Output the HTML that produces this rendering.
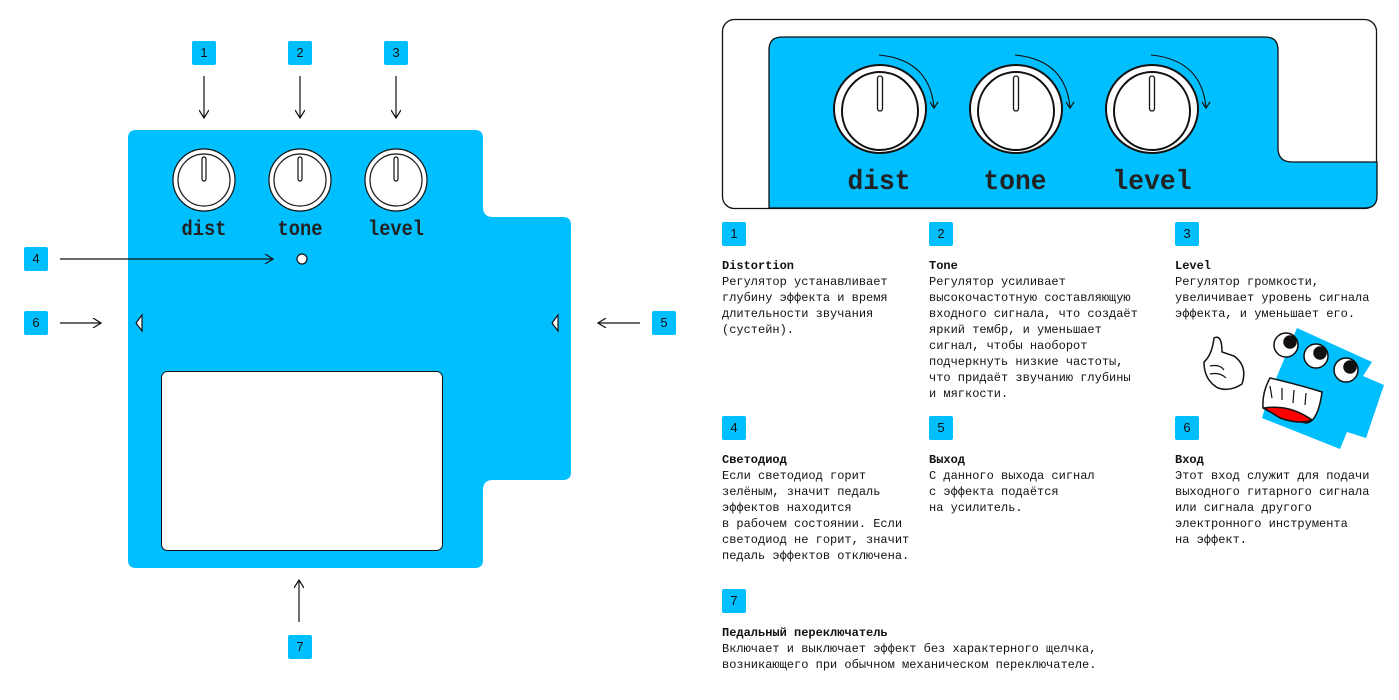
<!DOCTYPE html>
<html><head><meta charset="utf-8"><style>
*{margin:0;padding:0}
body{width:1399px;height:700px;background:#fff;position:relative;overflow:hidden;font-family:"Liberation Mono","DejaVu Sans Mono",monospace;color:#111}
.b{position:absolute;width:24px;height:24px;background:#00bfff;border-radius:2px;font:13px "Liberation Sans",sans-serif;line-height:24px;text-align:center;color:#111}
.t{position:absolute;font-size:12px;line-height:16px;white-space:pre}
.t b{font-weight:bold}
</style></head><body>
<svg width="1399" height="700" style="position:absolute;left:0;top:0">
<defs><marker id="a" markerWidth="10" markerHeight="10" refX="9" refY="5" orient="auto" markerUnits="userSpaceOnUse"><path d="M1,0 L9,5 L1,10" fill="none" stroke="#111" stroke-width="1.2"/></marker>
<marker id="s" markerWidth="10" markerHeight="10" refX="5" refY="8" orient="0" markerUnits="userSpaceOnUse"><path d="M1,2 L5,8 L9,2" fill="none" stroke="#111" stroke-width="1.2"/></marker></defs>
<path d="M136,130 H475 Q483,130 483,138 V207 Q483,217 493,217 H563 Q571,217 571,225 V472 Q571,480 563,480 H493 Q483,480 483,490 V560 Q483,568 475,568 H136 Q128,568 128,560 V138 Q128,130 136,130Z" fill="#00bfff"/>
<rect x="161.5" y="371.5" width="281" height="179" rx="6" fill="#fff" stroke="#111"/>
<g fill="#fff" stroke="#111" stroke-width="1.2">
<circle cx="204" cy="180" r="31"/><circle cx="204" cy="180" r="26"/><rect x="202" y="157" width="4" height="24" rx="2"/>
<circle cx="300" cy="180" r="31"/><circle cx="300" cy="180" r="26"/><rect x="298" y="157" width="4" height="24" rx="2"/>
<circle cx="396" cy="180" r="31"/><circle cx="396" cy="180" r="26"/><rect x="394" y="157" width="4" height="24" rx="2"/>
<circle cx="302" cy="259" r="5"/>
<path d="M142,315 L136,323 L142,331Z"/><path d="M558,315 L552,323 L558,331Z"/>
</g>
<g font-family="Liberation Mono,monospace" font-weight="bold" font-size="21" text-anchor="middle" fill="#222">
<text x="204" y="235" textLength="45" lengthAdjust="spacingAndGlyphs">dist</text><text x="300" y="235" textLength="45" lengthAdjust="spacingAndGlyphs">tone</text><text x="396" y="235" textLength="56" lengthAdjust="spacingAndGlyphs">level</text></g>
<g stroke="#111" stroke-width="1.2" marker-end="url(#a)">
<line x1="204" y1="76" x2="204" y2="118"/><line x1="300" y1="76" x2="300" y2="118"/><line x1="396" y1="76" x2="396" y2="118"/>
<line x1="60" y1="259" x2="273" y2="259"/><line x1="60" y1="323" x2="101" y2="323"/><line x1="640" y1="323" x2="598" y2="323"/>
<line x1="299" y1="622" x2="299" y2="580"/></g>
<!-- right panel -->
<rect x="722.5" y="19.5" width="654" height="189" rx="12" fill="#fff" stroke="#111" stroke-width="1.3"/>
<path d="M769,208 V50 Q769,37 782,37 H1265 Q1278,37 1278,50 V148 Q1278,162 1292,162 H1377 V196 Q1377,208 1365,208Z" fill="#00bfff" stroke="#111" stroke-width="1.3"/>
<g fill="#fff" stroke="#111" stroke-width="2">
<ellipse cx="880" cy="109" rx="46" ry="44"/><ellipse cx="880" cy="111" rx="38" ry="39"/><rect x="877.5" y="76" width="5" height="35" rx="2.5" stroke-width="1.3"/>
<ellipse cx="1016" cy="109" rx="46" ry="44"/><ellipse cx="1016" cy="111" rx="38" ry="39"/><rect x="1013.5" y="76" width="5" height="35" rx="2.5" stroke-width="1.3"/>
<ellipse cx="1152" cy="109" rx="46" ry="44"/><ellipse cx="1152" cy="111" rx="38" ry="39"/><rect x="1149.5" y="76" width="5" height="35" rx="2.5" stroke-width="1.3"/>
</g>
<g fill="none" stroke="#111" stroke-width="1.1" marker-end="url(#s)">
<path d="M879,55 Q930,60 934,108"/>
<path d="M1015,55 Q1066,60 1070,108"/>
<path d="M1151,55 Q1202,60 1206,108"/>
</g>
<g font-family="Liberation Mono,monospace" font-weight="bold" font-size="28" text-anchor="middle" fill="#222">
<text x="879" y="189" textLength="63" lengthAdjust="spacingAndGlyphs">dist</text><text x="1015" y="189" textLength="63" lengthAdjust="spacingAndGlyphs">tone</text><text x="1152" y="189" textLength="79" lengthAdjust="spacingAndGlyphs">level</text></g>
<!-- mascot -->
<g stroke="#111" stroke-width="1.5">
<path d="M1297,328 L1372,362 L1363,376 L1384,385 L1366,438 L1347,432 L1340,449 L1262,418 L1268,398Z" fill="#00bfff" stroke="none"/>
<circle cx="1286" cy="345" r="12" fill="#fff"/><circle cx="1290" cy="342" r="6" fill="#111"/>
<circle cx="1316" cy="356" r="12" fill="#fff"/><circle cx="1320" cy="353" r="6" fill="#111"/>
<circle cx="1346" cy="370" r="12" fill="#fff"/><circle cx="1350" cy="367" r="6" fill="#111"/>
<path d="M1270,378 Q1300,385 1322,392 Q1318,422 1306,423 Q1280,418 1263,408 Q1262,392 1270,378Z" fill="#fff"/>
<path d="M1270,386 L1272,398 M1282,388 L1282,400 M1294,390 L1293,403 M1306,393 L1305,405" fill="none" stroke-width="1.2"/>
<path d="M1264,408 Q1290,404 1312,420 Q1300,425 1280,418Z" fill="#f00"/>
<path d="M1214,338 Q1222,334 1222,352 L1234,356 Q1248,366 1242,384 Q1230,392 1218,388 Q1204,380 1204,362 Q1212,355 1214,338Z" fill="#fff"/>
<path d="M1210,366 Q1220,364 1224,370 M1210,374 Q1220,372 1226,378" fill="none" stroke-width="1.2"/>
</g>
</svg>
<div class="b" style="left:192px;top:41px">1</div><div class="b" style="left:288px;top:41px">2</div><div class="b" style="left:384px;top:41px">3</div>
<div class="b" style="left:24px;top:247px">4</div><div class="b" style="left:24px;top:311px">6</div><div class="b" style="left:652px;top:311px">5</div><div class="b" style="left:288px;top:635px">7</div>
<div class="b" style="left:722px;top:222px">1</div><div class="b" style="left:929px;top:222px">2</div><div class="b" style="left:1175px;top:222px">3</div>
<div class="b" style="left:722px;top:416px">4</div><div class="b" style="left:929px;top:416px">5</div><div class="b" style="left:1175px;top:416px">6</div>
<div class="b" style="left:722px;top:589px">7</div>
<div class="t" style="left:722px;top:258px"><b>Distortion</b>
Регулятор устанавливает
глубину эффекта и время
длительности звучания
(сустейн).</div>
<div class="t" style="left:929px;top:258px"><b>Tone</b>
Регулятор усиливает
высокочастотную составляющую
входного сигнала, что создаёт
яркий тембр, и уменьшает
сигнал, чтобы наоборот
подчеркнуть низкие частоты,
что придаёт звучанию глубины
и мягкости.</div>
<div class="t" style="left:1175px;top:258px"><b>Level</b>
Регулятор громкости,
увеличивает уровень сигнала
эффекта, и уменьшает его.</div>
<div class="t" style="left:722px;top:452px"><b>Светодиод</b>
Если светодиод горит
зелёным, значит педаль
эффектов находится
в рабочем состоянии. Если
светодиод не горит, значит
педаль эффектов отключена.</div>
<div class="t" style="left:929px;top:452px"><b>Выход</b>
С данного выхода сигнал
с эффекта подаётся
на усилитель.</div>
<div class="t" style="left:1175px;top:452px"><b>Вход</b>
Этот вход служит для подачи
выходного гитарного сигнала
или сигнала другого
электронного инструмента
на эффект.</div>
<div class="t" style="left:722px;top:625px"><b>Педальный переключатель</b>
Включает и выключает эффект без характерного щелчка,
возникающего при обычном механическом переключателе.</div>
</body></html>
